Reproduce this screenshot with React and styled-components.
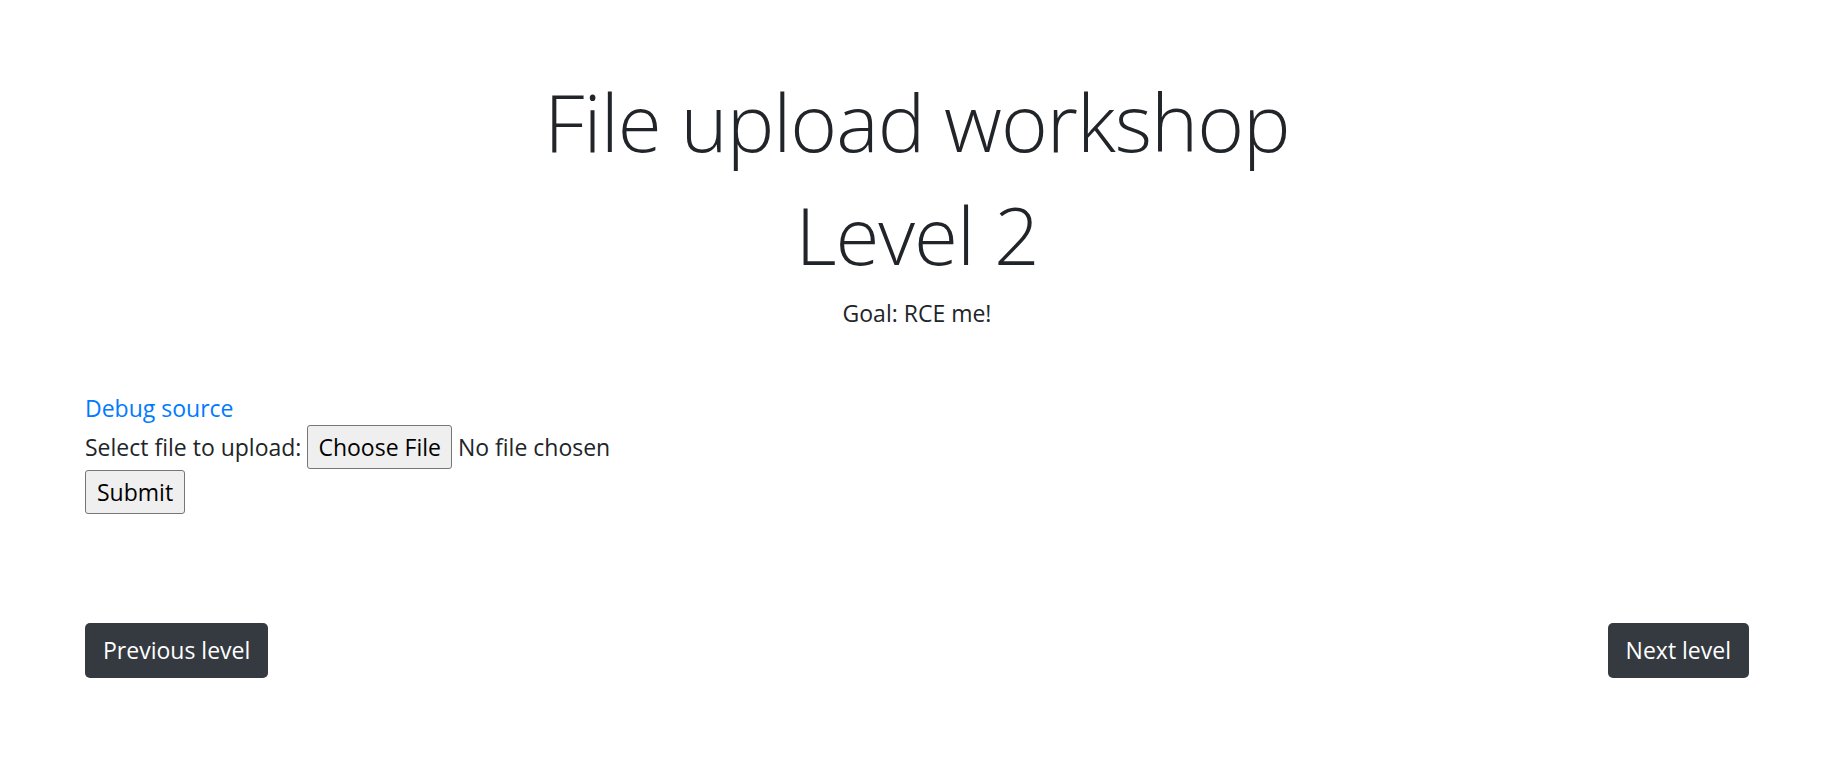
import React from "react";
import styled, { createGlobalStyle } from "styled-components";

const GlobalStyle = createGlobalStyle`
  body {
    margin: 0;
    background: #fff;
    color: #212529;
    font-family: "Segoe UI", "Open Sans", "Noto Sans", sans-serif;
    font-size: 23px;
    line-height: 1.5;
  }
`;

const Page = styled.div`
  padding: 0 81px 0 85px;
`;

const Header = styled.header`
  text-align: center;
  padding-top: 64px;
`;

const Title = styled.h1`
  margin: 0;
  font-size: 80px;
  font-weight: 300;
  line-height: 113px;
  letter-spacing: -1px;
`;

const Goal = styled.p`
  margin: 6px 0 0;
`;

const Content = styled.section`
  margin-top: 60px;
`;

const DebugLink = styled.a`
  display: block;
  color: #007bff;
  text-decoration: none;
`;

const UploadRow = styled.div`
  display: flex;
  align-items: center;
  gap: 6px;
`;

const FileInput = styled.input`
  font: inherit;
  color: #212529;

  &::file-selector-button {
    font-family: inherit;
    font-size: 23px;
    height: 44px;
    padding: 0 10px;
    margin-right: 6px;
    background: #efefef;
    color: #000;
    border: 1px solid #767676;
    border-radius: 3px;
  }
`;

const SubmitButton = styled.input`
  display: block;
  font-family: inherit;
  font-size: 23px;
  height: 44px;
  padding: 0 11px;
  margin-top: 1px;
  background: #efefef;
  color: #000;
  border: 1px solid #767676;
  border-radius: 3px;
`;

const Nav = styled.nav`
  display: flex;
  justify-content: space-between;
  margin-top: 109px;
`;

const NavButton = styled.a`
  display: inline-flex;
  align-items: center;
  height: 55px;
  padding: 0 18px;
  background: #343a40;
  color: #fff;
  font-size: 23px;
  border-radius: 5px;
  text-decoration: none;
`;

export default function App() {
  return (
    <>
      <GlobalStyle />
      <Page>
        <Header>
          <Title>
            File upload workshop
            <br />
            Level 2
          </Title>
          <Goal>Goal: RCE me!</Goal>
        </Header>
        <Content>
          <DebugLink href="#">Debug source</DebugLink>
          <form onSubmit={(e) => e.preventDefault()}>
            <UploadRow>
              Select file to upload:
              <FileInput type="file" name="file" />
            </UploadRow>
            <SubmitButton type="submit" value="Submit" />
          </form>
        </Content>
        <Nav>
          <NavButton href="#">Previous level</NavButton>
          <NavButton href="#">Next level</NavButton>
        </Nav>
      </Page>
    </>
  );
}
